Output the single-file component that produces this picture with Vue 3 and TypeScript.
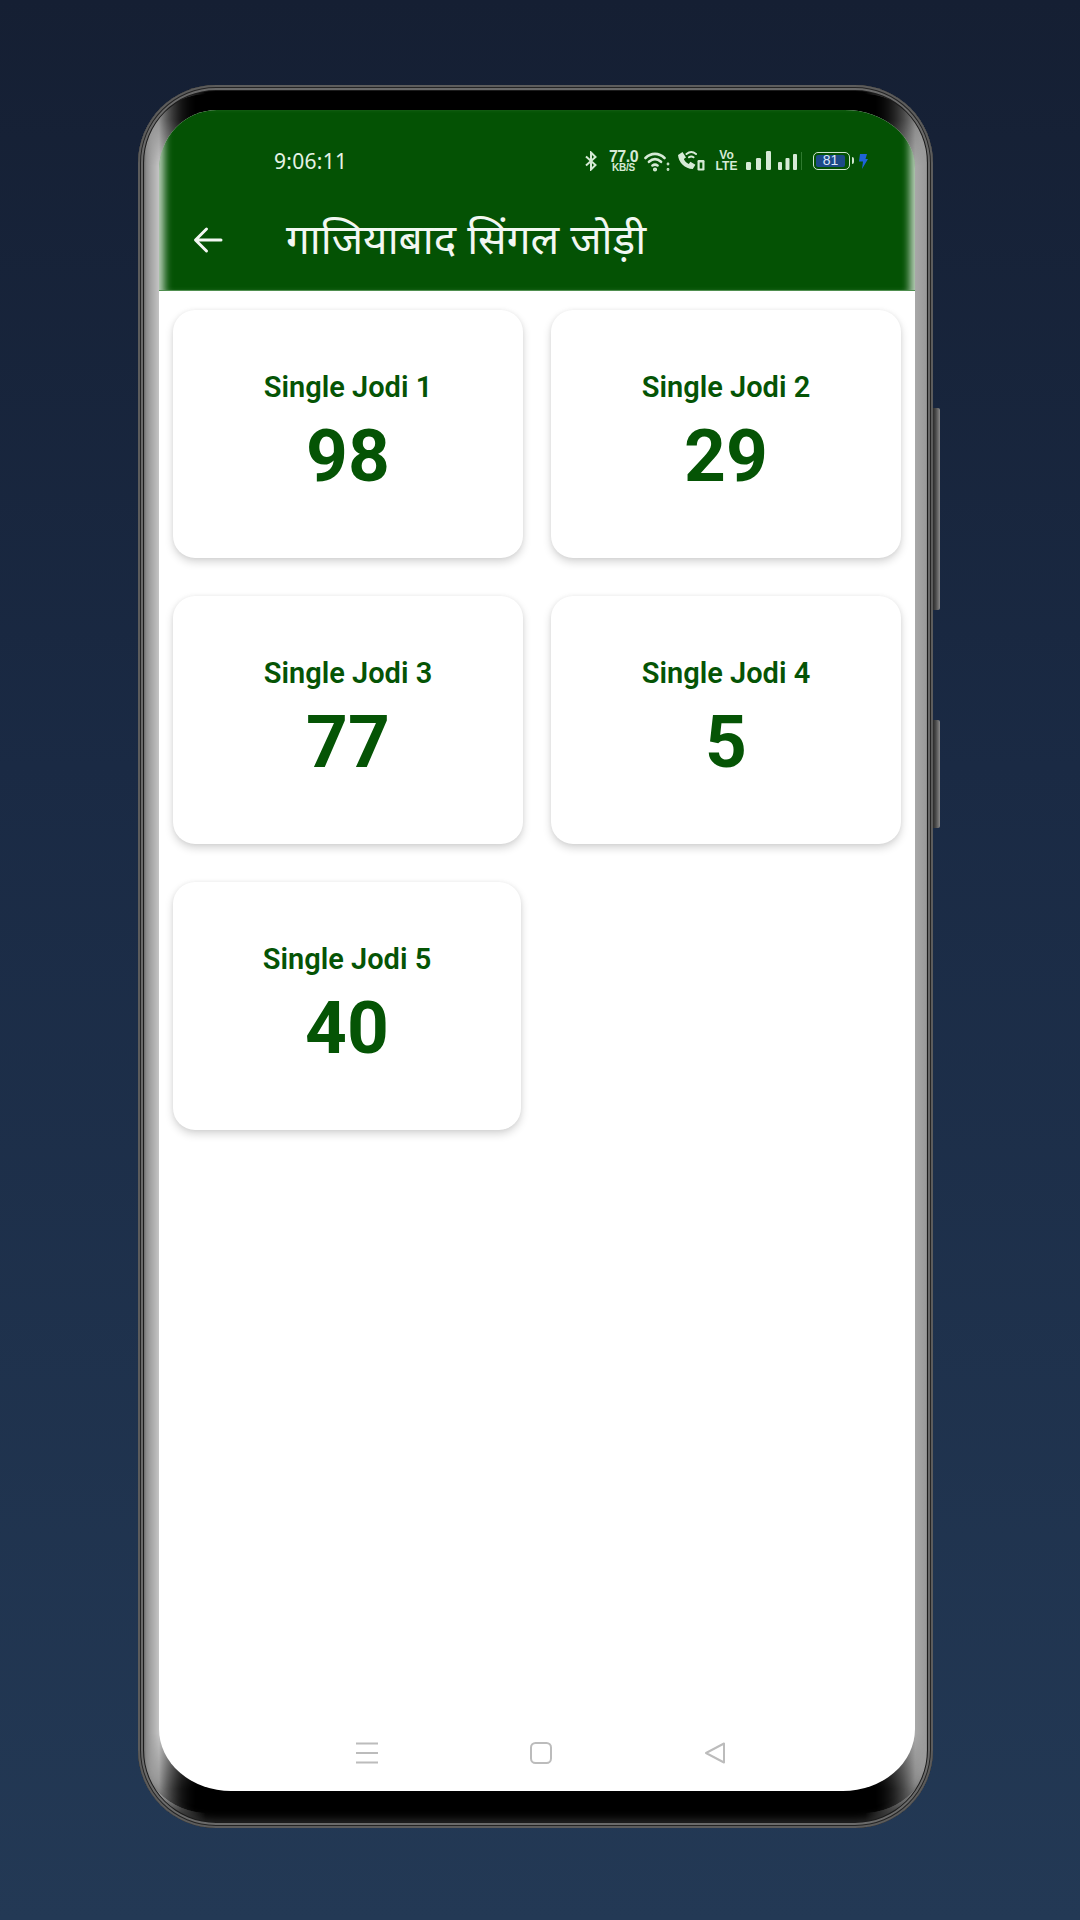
<script setup lang="ts">
interface Jodi { label: string; value: string }
const items: Jodi[] = [
  { label: 'Single Jodi 1', value: '98' },
  { label: 'Single Jodi 2', value: '29' },
  { label: 'Single Jodi 3', value: '77' },
  { label: 'Single Jodi 4', value: '5' },
  { label: 'Single Jodi 5', value: '40' },
]
</script>

<template>
  <div class="page">
    <div class="phone">
      <i class="inner-black"></i>
      <i class="side-btn btn-a"></i>
      <i class="side-btn btn-b"></i>
      <div class="screen">
        <header class="header">
          <div class="status">
            <span class="time">9:06:11</span>
            <div class="status-icons">
              <svg class="ic-bt" width="12" height="20" viewBox="0 0 12 20" fill="none" stroke="#d6ead6" stroke-width="2"><path d="M1 5.500 10.500 14 6 18.500V1.500L10.500 6 1 14.500"/></svg>
              <span class="speed"><b>77.0</b><small>KB/S</small></span>
              <svg class="ic-wifi" width="26" height="21" viewBox="0 0 26 21" fill="#d6ead6" stroke="#d6ead6" stroke-width="2.600" stroke-linecap="round"><path fill="none" d="M1.500 7C7 1.500 15 1.500 20.500 7M5 10.800c3.800-3.300 8.200-3.300 12 0M8.500 14.500c1.800-1.300 3.200-1.300 5 0"/><circle cx="11" cy="18.500" r=".8"/><circle cx="24" cy="13" r=".5" stroke-width="1.800"/><circle cx="24" cy="18.500" r=".5" stroke-width="1.800"/></svg>
              <svg class="ic-call" width="28" height="22" viewBox="0 0 28 22" fill="none"><path d="M1 5 5.500 2 9 7.500 6.800 9c1 2.300 2.600 4 5 5l1.600-2.200 5 3-2.600 4.200C8 19 1.500 12.500 1 5Z" fill="#d6ead6"/><path d="M9.500 4c3-2.600 6.500-2.600 9.500 0M12 7.300c1.600-1.200 3-1.200 4.500 0" stroke="#d6ead6" stroke-width="2" stroke-linecap="round"/><rect x="20.500" y="10" width="7" height="10.500" rx="1.200" fill="#d6ead6"/><rect x="22.700" y="12.500" width="2.600" height="6" fill="#045204"/></svg>
              <span class="volte"><b>Vo</b><b>LTE</b></span>
              <svg class="ic-sig" width="25" height="20" viewBox="0 0 25 20" fill="#d6ead6"><rect x="0" y="11" width="5" height="8" rx="1.200"/><rect x="10" y="7" width="5" height="12" rx="1.200"/><rect x="20" y="0" width="5" height="19" rx="1.200"/></svg>
              <svg class="ic-sig2" width="20" height="20" viewBox="0 0 20 20" fill="#d6ead6"><rect x="0" y="11" width="4" height="8" rx="1"/><rect x="7.500" y="7" width="4" height="12" rx="1"/><rect x="15" y="3" width="4" height="16" rx="1"/></svg>
              <i class="faint"></i>
              <span class="battery"><span class="batt-fill">81</span></span>
              <svg class="ic-bolt" width="9" height="15" viewBox="0 0 9 15" fill="#1f63d8"><path d="M1 0h7L6.500 5H9L3 15l1-7.500H0Z"/></svg>
            </div>
          </div>
          <div class="toolbar">
            <svg class="back" width="30" height="28" viewBox="0 0 30 28" fill="none" stroke="#f2f7f2" stroke-width="3" stroke-linecap="round" stroke-linejoin="round"><path d="M28 14H3M13.500 3 2.500 14l11 11"/></svg>
            <h1 class="title">गाजियाबाद सिंगल जोड़ी</h1>
          </div>
        </header>
        <main class="grid">
          <article v-for="it in items" :key="it.label" class="card">
            <div class="label">{{ it.label }}</div>
            <div class="value">{{ it.value }}</div>
          </article>
        </main>
        <nav class="nav">
          <svg width="22" height="22" viewBox="0 0 22 22" stroke="#bcbcbc" stroke-width="2" fill="none"><path d="M0 1.500h22M0 11h22M0 20.500h22"/></svg>
          <svg width="22" height="22" viewBox="0 0 22 22" stroke="#bcbcbc" stroke-width="2" fill="none"><rect x="1" y="1" width="20" height="20" rx="4.500"/></svg>
          <svg width="22" height="22" viewBox="0 0 22 22" stroke="#bcbcbc" stroke-width="2" fill="none" stroke-linejoin="round"><path d="M20 1.500V20.500L2 11Z"/></svg>
        </nav>
      </div>
    </div>
  </div>
</template>

<style>
html, body { margin: 0; padding: 0; }
</style>

<style scoped>
.page {
  width: 1080px;
  height: 1920px;
  box-sizing: border-box;
  padding: 85px 147px 0 138px;
  background: linear-gradient(180deg, #151f33 0%, #1a2a44 40%, #233955 100%);
  overflow: hidden;
}
.phone {
  position: relative;
  box-sizing: border-box;
  width: 795px;
  height: 1743px;
  padding: 25px 18px 37px 21px;
  border-radius: 78px;
  background: linear-gradient(90deg, #5c5c5c 0, #262626 2px, #4a4a4a 4px, #8a8a8a 8px, #a4a4a4 13px, #c4c4c4 21px, #4a4a4a 44px, #000 68px, #000 727px, #4a4a4a 751px, #a8a8a8 777px, #9a9a9a 788px, #4a4a4a 791px, #2a2a2a 793px, #6a6a6a 795px);
}
.phone::after {
  content: "";
  position: absolute;
  inset: 0;
  border-radius: 78px;
  box-shadow: inset 0 0 0 2px #5c5c5c, inset 0 0 0 3px #242424, inset 0 0 0 5px #6a6a6a, inset 0 0 0 6px #1c1c1c, inset 0 -16px 10px -8px #2e2e2e;
}
.inner-black {
  position: absolute;
  inset: 9px 0 15px;
  border-radius: 70px;
  background: linear-gradient(180deg, #000 0, #000 26px, rgba(0,0,0,0) 72px, rgba(0,0,0,0) calc(100% - 80px), #000 calc(100% - 24px), #000 100%);
  -webkit-mask-image: linear-gradient(90deg, transparent 8px, #000 58px, #000 calc(100% - 58px), transparent calc(100% - 8px));
  mask-image: linear-gradient(90deg, transparent 8px, #000 58px, #000 calc(100% - 58px), transparent calc(100% - 8px));
}
.side-btn {
  position: absolute;
  right: -7px;
  width: 7px;
  background: linear-gradient(90deg, #2c2c2c, #4a4a4a 40%, #8a8a8a);
  border-radius: 0 2px 2px 0;
}
.btn-a { top: 323px; height: 202px; }
.btn-b { top: 635px; height: 108px; }
.screen {
  position: relative;
  z-index: 1;
  display: flex;
  flex-direction: column;
  height: 1681px;
  background: #fff;
  border-radius: 58px 70px 72px 72px / 60px 58px 62px 62px;
  overflow: hidden;
}
.header {
  box-sizing: border-box;
  height: 181px;
  flex: none;
  background: #045204;
  color: #f2f7f2;
  border-bottom: 1px solid #4f8f4f;
  box-shadow: inset 12px 0 9px -7px rgba(255,255,255,.75), inset -12px 0 9px -7px rgba(255,255,255,.75);
  font-family: "Noto Sans", "Noto Sans Devanagari", "Lohit Devanagari", sans-serif;
}
.status {
  display: flex;
  align-items: center;
  justify-content: space-between;
  height: 30px;
  padding: 36px 47px 0 115px;
}
.time {
  font-family: "Noto Sans", sans-serif;
  font-size: 21px;
  color: #e6f2e6;
  letter-spacing: .3px;
}
.status-icons {
  display: flex;
  align-items: center;
  color: #d6ead6;
}
.speed {
  display: flex;
  flex-direction: column;
  align-items: center;
  margin-left: 13px;
  width: 27px;
  font-family: "Liberation Sans", sans-serif;
  line-height: 1;
}
.speed b { font-size: 16px; font-weight: 700; line-height: 13px; letter-spacing: -.5px; }
.speed small { font-size: 10px; font-weight: 700; line-height: 10px; letter-spacing: -.2px; }
.ic-wifi { margin-left: 7px; }
.ic-call { margin-left: 7px; }
.volte {
  display: flex;
  flex-direction: column;
  align-items: center;
  margin-left: 10px;
  width: 23px;
  font-family: "Liberation Sans", sans-serif;
  font-size: 12px;
  line-height: 11px;
}
.volte b { font-weight: 700; }
.ic-sig { margin-left: 8px; }
.ic-sig2 { margin-left: 7px; }
.faint { width: 1px; height: 18px; margin-left: 3px; background: #2f7a2f; }
.battery {
  position: relative;
  display: block;
  box-sizing: border-box;
  width: 37px;
  height: 18px;
  margin-left: 11px;
  padding: 2px;
  border: 1.5px solid #cfe6cf;
  border-radius: 5px;
}
.battery::after {
  content: "";
  position: absolute;
  right: -4.5px;
  top: 4px;
  width: 2px;
  height: 7px;
  background: #cfe6cf;
  border-radius: 0 2px 2px 0;
}
.batt-fill {
  display: block;
  height: 100%;
  margin-right: 2px;
  background: #1d4a87;
  border-radius: 2px;
  color: #dbe8fa;
  font-family: "Liberation Sans", sans-serif;
  font-size: 14px;
  line-height: 11px;
  text-align: center;
}
.ic-bolt { margin-left: 9px; }
.toolbar {
  display: flex;
  align-items: center;
  height: 56px;
  margin-top: 36px;
  padding-left: 34px;
}
.back { flex: none; }
.title {
  margin: 0 0 4px 63px;
  font-size: 42.3px;
  font-weight: 450;
  line-height: 56px;
  color: #f2f7f2;
  white-space: nowrap;
}
.grid {
  flex: 1;
  display: grid;
  grid-template-columns: 350px 350px;
  grid-auto-rows: 248px;
  column-gap: 28px;
  row-gap: 38px;
  align-content: start;
  padding: 19px 14px 0 14px;
}
.card {
  display: flex;
  flex-direction: column;
  align-items: center;
  justify-content: center;
  padding-top: 1px;
  background: #fff;
  border-radius: 22px;
  box-shadow: 0 4px 9px rgba(0,0,0,.17), 0 0 4px rgba(0,0,0,.05);
  color: #055405;
  font-family: Roboto, "Liberation Sans", sans-serif;
}
.card:last-child { margin-right: 2px; }
.label {
  font-size: 29px;
  font-weight: 600;
  line-height: 32px;
}
.value {
  margin-top: 11px;
  font-size: 73px;
  font-weight: 700;
  line-height: 84px;
}
.nav {
  flex: none;
  display: flex;
  align-items: center;
  justify-content: center;
  gap: 152px;
  height: 76px;
  padding-left: 7px;
}
</style>
